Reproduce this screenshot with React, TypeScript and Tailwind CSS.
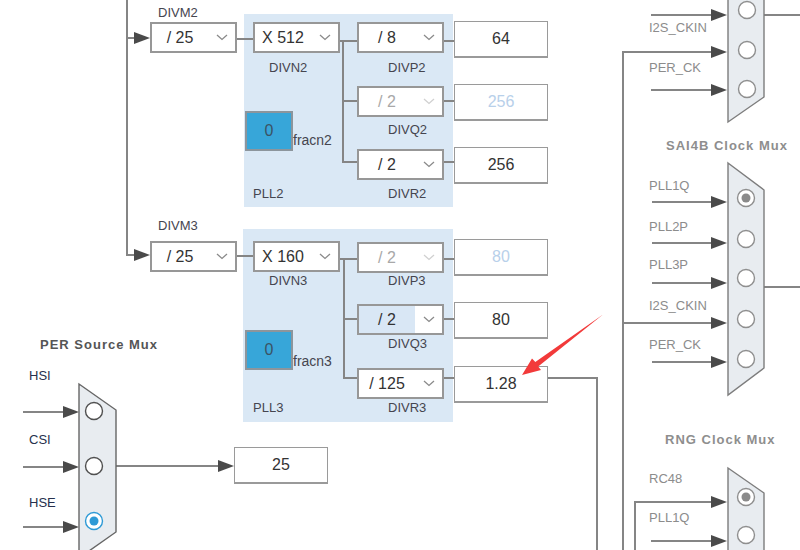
import clsx from "clsx";

const Chevron = ({ faded }: { faded?: boolean }) => (
  <svg width="12" height="7" viewBox="0 0 12 7">
    <polyline
      points="1,1 6,5.5 11,1"
      fill="none"
      stroke={faded ? "#d0d0d0" : "#8a8a8a"}
      strokeWidth="1.3"
    />
  </svg>
);

// Divider / multiplier select box
const Select = ({
  pos,
  value,
  faded,
  focused,
}: {
  pos: string;
  value: string;
  faded?: boolean;
  focused?: boolean;
}) => (
  <div className={clsx("absolute flex h-[31px] w-[87px] border-2 border-[#979797] bg-white", pos)}>
    <div
      className={clsx(
        "flex w-[56px] items-center justify-center text-[16px]",
        faded ? "text-[#a8a8a8]" : "text-[#333]",
        focused && "bg-[#d9e7f5]"
      )}
    >
      {value}
    </div>
    <div className="flex flex-1 items-center justify-center">
      <Chevron faded={faded} />
    </div>
  </div>
);

const Output = ({ pos, value, faded }: { pos: string; value: string; faded?: boolean }) => (
  <div
    className={clsx(
      "absolute flex h-[37px] w-[94px] items-center justify-center border border-b-2 border-[#9a9a9a] bg-white text-[16px]",
      faded ? "text-[#b8d0ea]" : "text-[#333]",
      pos
    )}
  >
    {value}
  </div>
);

const Label = ({ pos, text, tone = "dark" }: { pos: string; text: string; tone?: "dark" | "navy" | "light" }) => (
  <span
    className={clsx(
      "absolute whitespace-nowrap text-[13px] leading-4",
      tone === "dark" && "text-[#45454f]",
      tone === "navy" && "text-[#26304d]",
      tone === "light" && "text-[#8c8c8c]",
      pos
    )}
  >
    {text}
  </span>
);

const Title = ({ pos, text, light }: { pos: string; text: string; light?: boolean }) => (
  <span
    className={clsx(
      "absolute whitespace-nowrap text-[13px] font-bold leading-4 tracking-[1px]",
      light ? "text-[#8e8e8e]" : "text-[#555]",
      pos
    )}
  >
    {text}
  </span>
);

const Frac = ({ pos }: { pos: string }) => (
  <div
    className={clsx(
      "absolute flex h-[40px] w-[48px] items-center justify-center border-2 border-[#8c959c] bg-[#37a6d9] text-[16px] text-[#3b5364]",
      pos
    )}
  >
    0
  </div>
);

const wires = [
  "M127,0 V255 H136",
  "M127,38 H136",
  "M237,39 H253",
  "M339,41 H357",
  "M343,41 V162 H357",
  "M343,101 H357",
  "M443,41 H454",
  "M443,101 H454",
  "M443,162 H454",
  "M237,256 H253",
  "M339,259 H357",
  "M344,259 V378 H357",
  "M344,319 H357",
  "M443,259 H454",
  "M443,319 H454",
  "M443,378 H454",
  "M548,378 H597 V550",
  "M623,550 V52 H714",
  "M623,323 H714",
  "M635,550 V502 H714",
  "M651,15 H714",
  "M651,90 H714",
  "M652,202 H714",
  "M652,243 H714",
  "M652,283 H714",
  "M652,362 H714",
  "M651,541 H714",
  "M23,412 H66",
  "M23,467 H66",
  "M23,527 H66",
  "M116,466 H222",
  "M764,15 H800",
  "M764,287 H800",
];

const heads: [number, number][] = [
  [150, 38],
  [150, 255],
  [79, 412],
  [79, 467],
  [79, 527],
  [234, 466],
  [727, 15],
  [727, 52],
  [727, 90],
  [727, 202],
  [727, 243],
  [727, 283],
  [727, 323],
  [727, 362],
  [727, 502],
  [727, 541],
];

type Dot = { x: number; y: number; on?: boolean };

const Mux = ({ points, dots, light }: { points: string; dots: Dot[]; light?: boolean }) => {
  const ring = light ? "#8f8f8f" : "#505050";
  return (
    <g>
      <polygon points={points} fill="#e8ecf0" stroke={light ? "#7d7d7d" : "#666"} strokeWidth="1.4" />
      {dots.map((d) => (
        <g key={d.y}>
          <circle
            cx={d.x}
            cy={d.y}
            r="8.5"
            fill="white"
            stroke={d.on && !light ? "#2e9ad6" : ring}
            strokeWidth="1.4"
          />
          {d.on && <circle cx={d.x} cy={d.y} r="4.5" fill={light ? "#8a8a8a" : "#2e9ad6"} />}
        </g>
      ))}
    </g>
  );
};

export default function App() {
  return (
    <div className="relative h-[550px] w-[800px] overflow-hidden bg-white font-['Liberation_Sans',Arial,sans-serif]">
      {/* PLL panels */}
      <div className="absolute left-[244px] top-[14px] h-[193px] w-[209px] bg-[#dae8f5]" />
      <div className="absolute left-[243px] top-[229px] h-[193px] w-[210px] bg-[#dae8f5]" />

      <svg className="absolute inset-0" width="800" height="550">
        {wires.map((d) => (
          <path key={d} d={d} fill="none" stroke="#858585" strokeWidth="2" />
        ))}
        {heads.map(([x, y]) => (
          <polygon key={`${x}-${y}`} points={`${x - 16},${y - 6} ${x},${y} ${x - 16},${y + 6}`} fill="#4a4a4a" />
        ))}
        <Mux
          points="79,384 116,410 116,532 79,558"
          dots={[
            { x: 94, y: 411 },
            { x: 94, y: 466 },
            { x: 94, y: 521, on: true },
          ]}
        />
        <Mux
          light
          points="728,-20 764,-20 764,97 728,122"
          dots={[
            { x: 747, y: 10 },
            { x: 747, y: 50 },
            { x: 747, y: 89 },
          ]}
        />
        <Mux
          light
          points="728,163 764,190 764,368 728,395"
          dots={[
            { x: 746, y: 198, on: true },
            { x: 746, y: 239 },
            { x: 746, y: 278 },
            { x: 746, y: 319 },
            { x: 746, y: 359 },
          ]}
        />
        <Mux
          light
          points="728,468 764,493 764,570 728,570"
          dots={[
            { x: 746, y: 497, on: true },
            { x: 746, y: 535 },
          ]}
        />
      </svg>

      {/* PLL2 */}
      <Label pos="left-[158px] top-[5px]" text="DIVM2" />
      <Select pos="left-[150px] top-[22px]" value="/ 25" />
      <Select pos="left-[253px] top-[22px]" value="X 512" />
      <Label pos="left-[269px] top-[60px]" text="DIVN2" />
      <Select pos="left-[357px] top-[22px]" value="/ 8" />
      <Label pos="left-[388px] top-[60px]" text="DIVP2" />
      <Select pos="left-[357px] top-[86px]" value="/ 2" faded />
      <Label pos="left-[388px] top-[122px]" text="DIVQ2" />
      <Select pos="left-[357px] top-[149px]" value="/ 2" />
      <Label pos="left-[388px] top-[186px]" text="DIVR2" />
      <Label pos="left-[253px] top-[186px]" text="PLL2" />
      <Frac pos="left-[245px] top-[111px]" />
      <span className="absolute left-[293px] top-[132px] text-[14px] leading-4 text-[#45454f]">fracn2</span>
      <Output pos="left-[454px] top-[21px]" value="64" />
      <Output pos="left-[454px] top-[84px]" value="256" faded />
      <Output pos="left-[454px] top-[147px]" value="256" />

      {/* PLL3 */}
      <Label pos="left-[158px] top-[218px]" text="DIVM3" />
      <Select pos="left-[150px] top-[241px]" value="/ 25" />
      <Select pos="left-[253px] top-[241px]" value="X 160" />
      <Label pos="left-[269px] top-[273px]" text="DIVN3" />
      <Select pos="left-[357px] top-[242px]" value="/ 2" faded />
      <Label pos="left-[388px] top-[273px]" text="DIVP3" />
      <Select pos="left-[357px] top-[304px]" value="/ 2" focused />
      <Label pos="left-[388px] top-[336px]" text="DIVQ3" />
      <Select pos="left-[357px] top-[368px]" value="/ 125" />
      <Label pos="left-[388px] top-[400px]" text="DIVR3" />
      <Label pos="left-[253px] top-[400px]" text="PLL3" />
      <Frac pos="left-[245px] top-[330px]" />
      <span className="absolute left-[293px] top-[353px] text-[14px] leading-4 text-[#45454f]">fracn3</span>
      <Output pos="left-[454px] top-[239px]" value="80" faded />
      <Output pos="left-[454px] top-[302px]" value="80" />
      <Output pos="left-[454px] top-[366px]" value="1.28" />

      {/* PER source mux */}
      <Title pos="left-[40px] top-[337px]" text="PER Source Mux" />
      <Label pos="left-[29px] top-[368px]" text="HSI" tone="navy" />
      <Label pos="left-[29px] top-[432px]" text="CSI" tone="navy" />
      <Label pos="left-[29px] top-[495px]" text="HSE" tone="navy" />
      <Output pos="left-[234px] top-[447px]" value="25" />

      {/* Right column muxes */}
      <Label pos="left-[649px] top-[20px]" text="I2S_CKIN" tone="light" />
      <Label pos="left-[649px] top-[60px]" text="PER_CK" tone="light" />
      <Title pos="left-[666px] top-[138px]" text="SAI4B Clock Mux" light />
      <Label pos="left-[649px] top-[178px]" text="PLL1Q" tone="light" />
      <Label pos="left-[649px] top-[219px]" text="PLL2P" tone="light" />
      <Label pos="left-[649px] top-[257px]" text="PLL3P" tone="light" />
      <Label pos="left-[649px] top-[298px]" text="I2S_CKIN" tone="light" />
      <Label pos="left-[649px] top-[337px]" text="PER_CK" tone="light" />
      <Title pos="left-[665px] top-[432px]" text="RNG Clock Mux" light />
      <Label pos="left-[649px] top-[471px]" text="RC48" tone="light" />
      <Label pos="left-[649px] top-[510px]" text="PLL1Q" tone="light" />

      {/* annotation arrow */}
      <svg className="absolute inset-0" width="800" height="550">
        <polygon
          points="522,375 532,358.5 535.3,362 603,314.5 538.2,366.5 541,370"
          fill="#f23a3a"
        />
      </svg>
    </div>
  );
}
